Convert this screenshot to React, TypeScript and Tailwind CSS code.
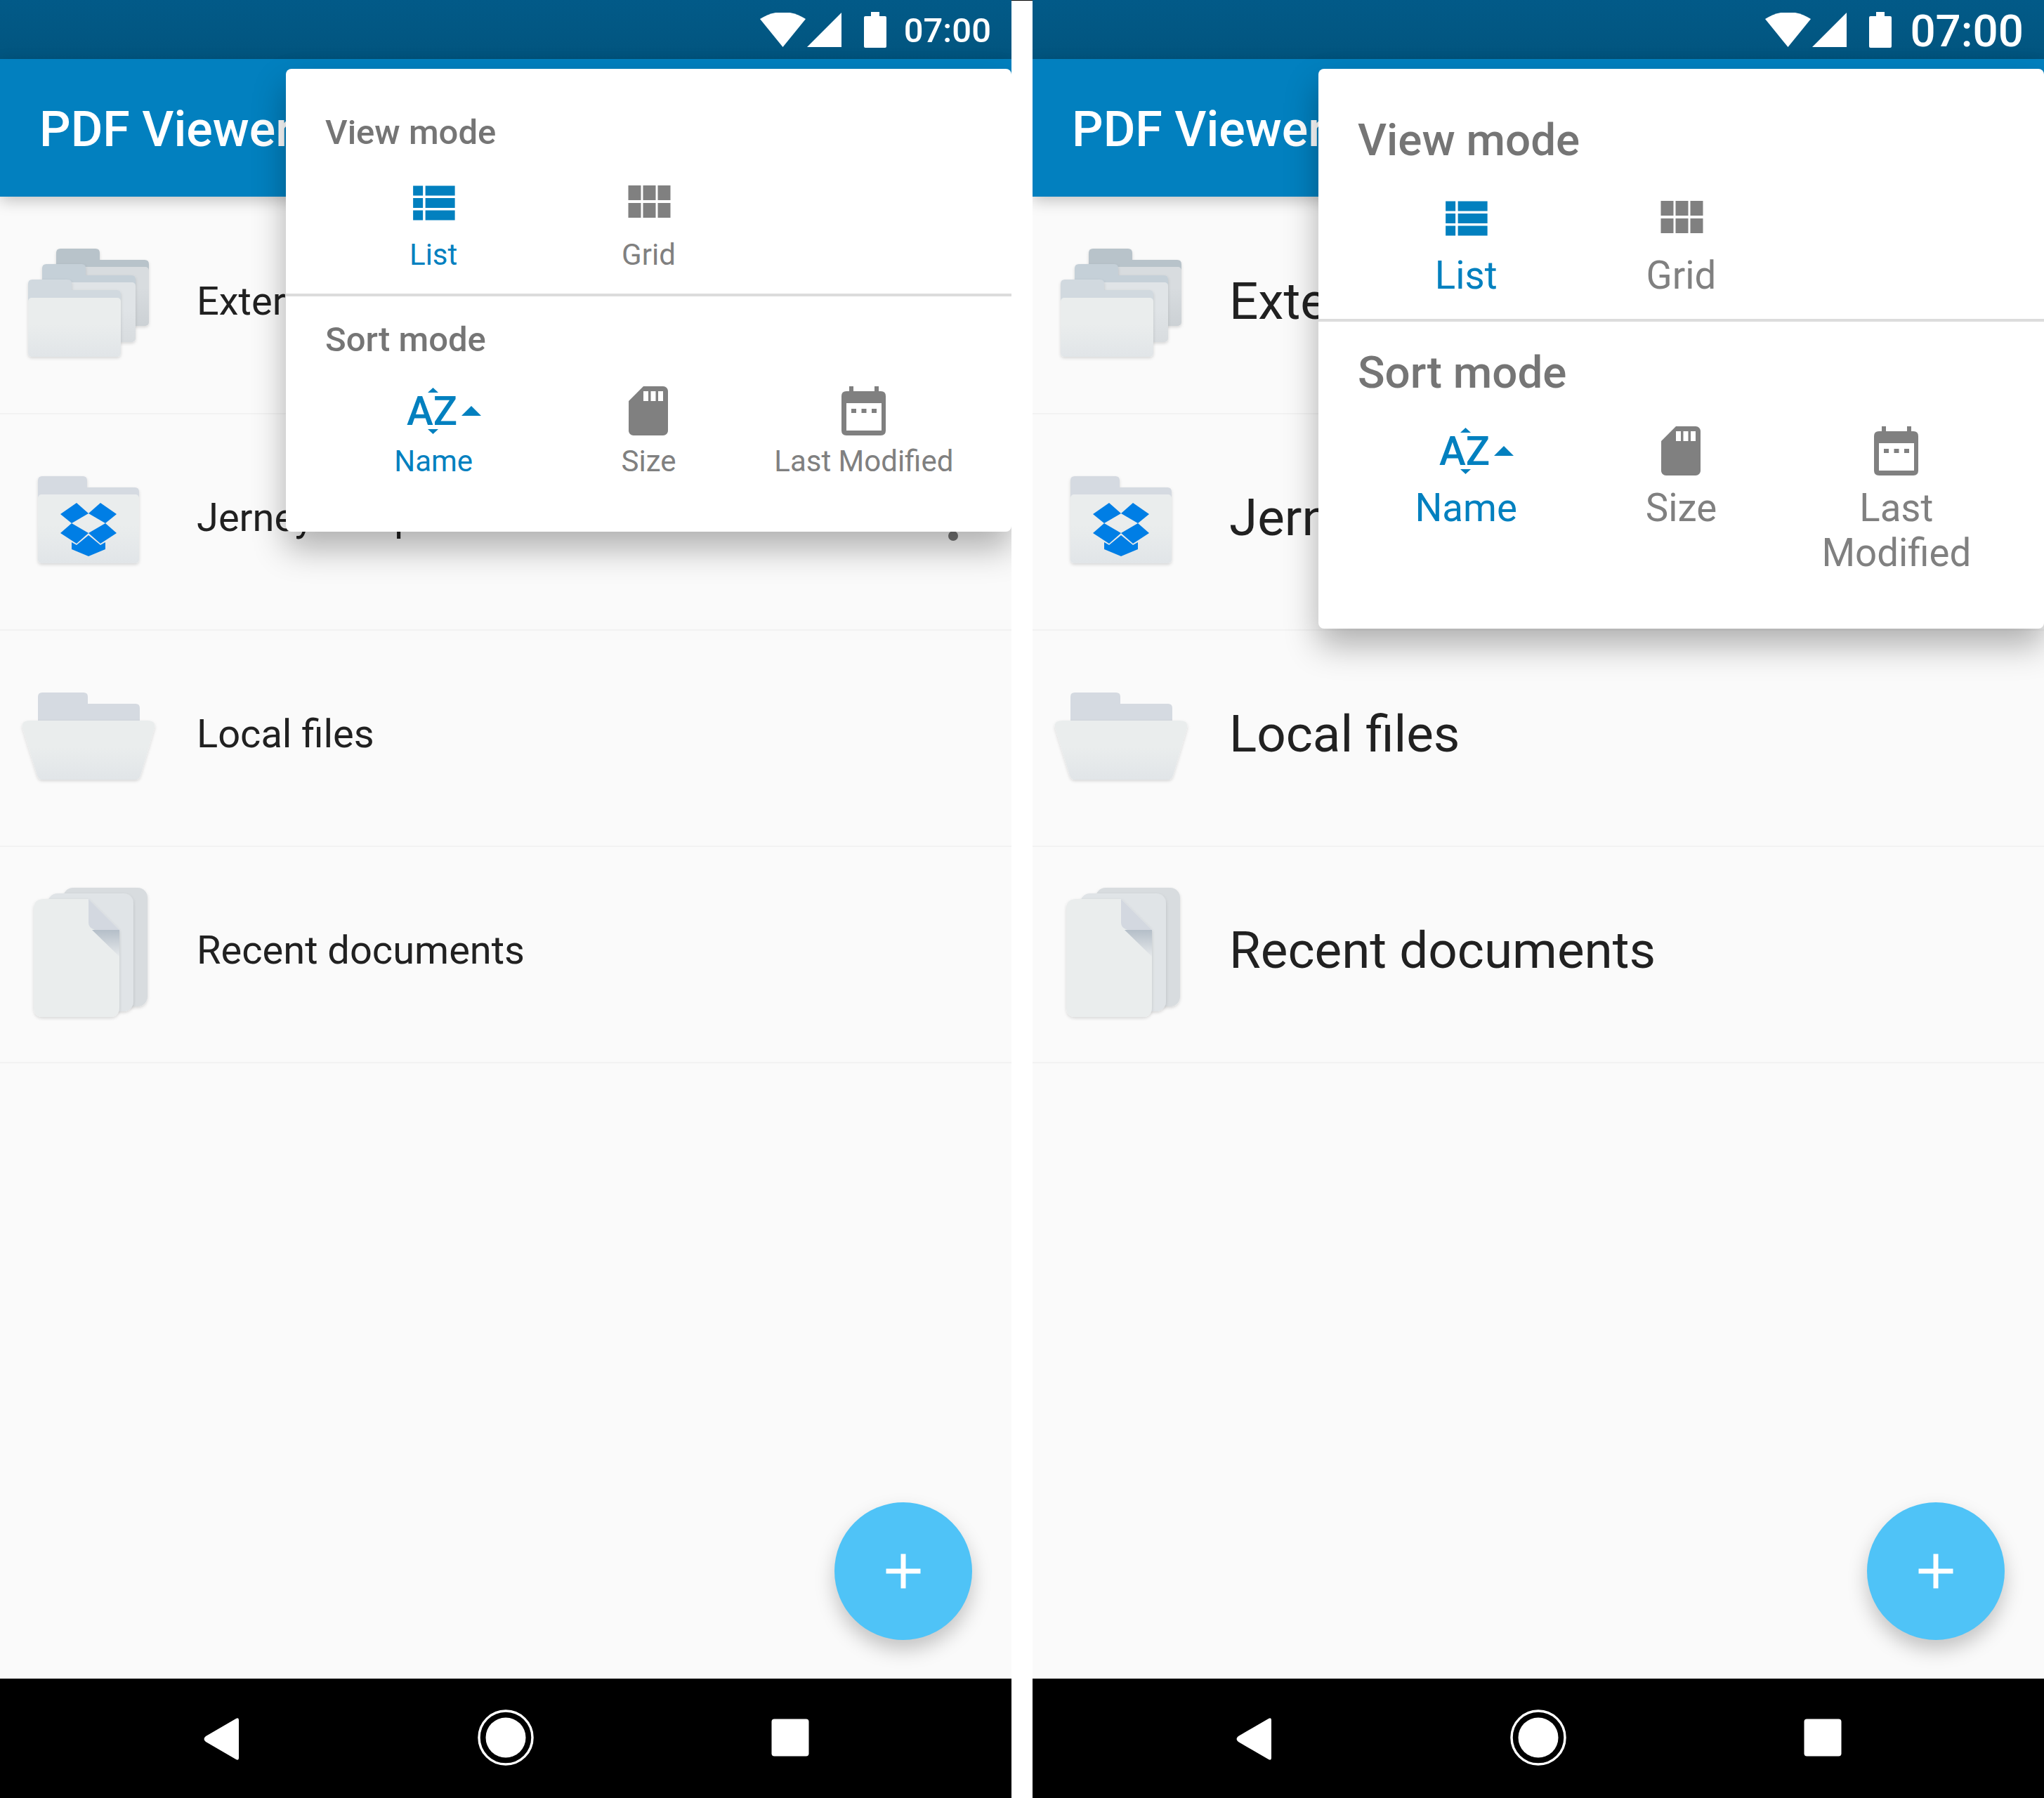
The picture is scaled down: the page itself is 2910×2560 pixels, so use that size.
import type { ReactNode } from "react";

const BLUE = "#0280bf";
const GREY = "#808080";

function IconDefs() {
  return (
    <defs>
      <linearGradient id="sheet" x1="0" y1="0" x2="0" y2="1">
        <stop offset="0.45" stopColor="#eaeded" />
        <stop offset="1" stopColor="#e1e5e8" />
      </linearGradient>
      <linearGradient id="sheetMid" x1="0" y1="0" x2="0" y2="1">
        <stop offset="0.45" stopColor="#e0e4e7" />
        <stop offset="1" stopColor="#d8dcdf" />
      </linearGradient>
      <linearGradient id="sheetBack" x1="0" y1="0" x2="0" y2="1">
        <stop offset="0.35" stopColor="#d8dcdf" />
        <stop offset="1" stopColor="#ccd1d5" />
      </linearGradient>
      <linearGradient id="fold" x1="0" y1="0" x2="0" y2="1">
        <stop offset="0" stopColor="#b4bec8" />
        <stop offset="1" stopColor="#e6e9eb" />
      </linearGradient>
      <filter id="soft" x="-20%" y="-20%" width="140%" height="140%">
        <feDropShadow dx="0" dy="2" stdDeviation="2" floodColor="#000" floodOpacity="0.14" />
      </filter>
    </defs>
  );
}

function Folder({ x, top, w, tab, dip, sheet, bottom, back, fill }: {
  x: number;
  top: number;
  w: number;
  tab: number;
  dip: number;
  sheet: number;
  bottom: number;
  back: string;
  fill: string;
}) {
  return (
    <g filter="url(#soft)">
      <path
        d={`M${x} ${sheet + 8} V${top + 6} q0 -6 6 -6 H${x + tab - 6} q6 0 6 6 V${dip} H${x + w - 6} q6 0 6 6 V${sheet + 8} Z`}
        fill={back}
      />
      <rect x={x} y={sheet} width={w} height={bottom - sheet} rx="5" fill={fill} />
    </g>
  );
}

function StackIcon() {
  return (
    <>
      <Folder x={80} top={74} w={132} tab={62} dip={90} sheet={100} bottom={184} back="#b8c3ca" fill="url(#sheetBack)" />
      <Folder x={60} top={96} w={133} tab={62} dip={112} sheet={122} bottom={207} back="#c5d0d8" fill="url(#sheetMid)" />
      <Folder x={40} top={118} w={132} tab={62} dip={133} sheet={144} bottom={228} back="#d1d9df" fill="url(#sheet)" />
    </>
  );
}

function DropboxIcon() {
  return (
    <>
      <Folder x={54} top={90} w={144} tab={70} dip={106} sheet={116} bottom={214} back="#d5dae1" fill="url(#sheet)" />
      <g fill="#007ee5">
        <path d="M109 128 126 143 102 157 86 144Z" />
        <path d="M143 128 166 144 150 157 126 143Z" />
        <path d="M102 157 126 171 109 186 86 171Z" />
        <path d="M150 157 166 171 143 186 126 171Z" />
        <path d="M126 174 143 188 150 184V194L126 204 102 194V184L109 188Z" />
      </g>
    </>
  );
}

function OpenFolderIcon() {
  return (
    <>
      <path d="M54 132V96q0-6 6-6h59q6 0 6 6v10h68q6 0 6 6v20Z" fill="#d5dae1" />
      <path
        d="M42 130H210q12 0 10 10L200 208q-2 6-7 6H60q-5 0-7-6L32 140q-2-10 10-10Z"
        fill="url(#sheet)"
        filter="url(#soft)"
      />
    </>
  );
}

function DocumentsIcon() {
  return (
    <>
      <rect x="90" y="60" width="120" height="169" rx="14" fill="#d8dcdf" filter="url(#soft)" />
      <rect x="68" y="68" width="122" height="168" rx="14" fill="#e0e4e7" filter="url(#soft)" />
      <path
        d="M62 76H126L170 120V230q0 14-14 14H62q-14 0-14-14V90q0-14 14-14Z"
        fill="#eaeded"
        filter="url(#soft)"
      />
      <path d="M131 120H170V158Z" fill="url(#fold)" />
      <path d="M126 76 170 120H135q-9-3-9-10Z" fill="#d3d8e0" />
    </>
  );
}

function Row({ icon, label, textClass, menu }: { icon: ReactNode; label: string; textClass: string; menu?: boolean }) {
  return (
    <div className="flex h-[308px] items-center shadow-[0_2px_0_#f2f2f2]">
      <svg viewBox="0 0 280 308" className="h-[308px] w-[280px] shrink-0">
        {icon}
      </svg>
      <span className={`flex-1 whitespace-nowrap text-[#212121] ${textClass}`}>{label}</span>
      {menu && (
        <svg viewBox="0 0 24 24" className="mr-[41px] h-[84px] w-[84px] shrink-0" fill="#757575">
          <circle cx="12" cy="6" r="2" />
          <circle cx="12" cy="12" r="2" />
          <circle cx="12" cy="18" r="2" />
        </svg>
      )}
    </div>
  );
}

function ListIcon() {
  return (
    <svg viewBox="0.25 0 24 24" className="h-[84px] w-[84px]" fill={BLUE}>
      <path d="M4 14h4v-4H4v4zm0 5h4v-4H4v4zM4 9h4V5H4v4zm5 5h12v-4H9v4zm0 5h12v-4H9v4zM9 5v4h12V5H9z" />
    </svg>
  );
}

function GridIcon() {
  return (
    <svg viewBox="-1.500 0 84 84" className="h-[84px] w-[84px]" fill={GREY}>
      <rect x="12" y="17" width="18" height="21" />
      <rect x="33" y="17" width="18" height="21" />
      <rect x="54" y="17" width="18" height="21" />
      <rect x="12" y="42" width="18" height="21" />
      <rect x="33" y="42" width="18" height="21" />
      <rect x="54" y="42" width="18" height="21" />
    </svg>
  );
}

function AzIcon() {
  return (
    <svg viewBox="0 0 84 84" className="h-[84px] w-[84px] overflow-visible" fill={BLUE}>
      <text x="4" y="62" fontFamily="Roboto, sans-serif" fontSize="57" fontWeight="500">
        AZ
      </text>
      <path d="M41.500 9 49 16H34Z" />
      <path d="M34 68H49L41.500 75Z" />
      <path d="M82 49H110L96 35Z" />
    </svg>
  );
}

function SdIcon() {
  return (
    <svg viewBox="0 0 24 24" className="h-[84px] w-[84px]" fill={GREY}>
      <path d="M18 2h-8L4.020 8 4 20c0 1.100.9 2 2 2h12c1.100 0 2-.9 2-2V4c0-1.100-.9-2-2-2zm-6 6h-2V4h2v4zm3 0h-2V4h2v4zm3 0h-2V4h2v4z" />
    </svg>
  );
}

function CalendarIcon() {
  return (
    <svg viewBox="0 0 84 84" className="h-[84px] w-[84px]" fill={GREY}>
      <rect x="21" y="7" width="6" height="10" />
      <rect x="57" y="7" width="6" height="10" />
      <path
        fillRule="evenodd"
        d="M17 14H66q7 0 7 7V70q0 7-7 7H17q-7 0-7-7V21q0-7 7-7ZM17 31V70H67V31Z"
      />
      <rect x="24" y="39" width="7" height="6" />
      <rect x="38.500" y="39" width="7" height="6" />
      <rect x="53" y="39" width="7" height="6" />
    </svg>
  );
}

function Option({ icon, label, active, textClass }: { icon: ReactNode; label: string; active?: boolean; textClass: string }) {
  return (
    <div className="flex flex-col items-center">
      {icon}
      <span className={`text-center ${active ? "text-[#0280bf]" : "text-[#808080]"} ${textClass}`}>{label}</span>
    </div>
  );
}

function Popup({ big }: { big: boolean }) {
  const head = big ? "text-[63.7px] leading-[75px]" : "text-[49px] leading-[57px]";
  const viewLabel = big ? "mt-[7px] text-[54.6px] leading-[64px]" : "mt-[7px] text-[42px] leading-[49px]";
  const sortLabel = big ? "mt-[7px] text-[54.6px] leading-[64px]" : "mt-[5px] text-[42px] leading-[49px]";
  return (
    <div className="absolute left-[407px] right-0 top-[98px] z-20 rounded-[8px] bg-white shadow-[0_24px_48px_rgba(0,0,0,0.3)]">
      <div className={`border-b-4 border-[#dcdcdc] px-[57px] ${big ? "pb-[30px] pt-[64px]" : "pb-[31px] pt-[62px]"}`}>
        <div className={`-ml-px font-medium text-[#757575] ${head}`}>View mode</div>
        <div className={`grid grid-cols-3 ${big ? "mt-[32px]" : "mt-[30px]"}`}>
          <Option icon={<ListIcon />} label="List" active textClass={viewLabel} />
          <Option icon={<GridIcon />} label="Grid" textClass={viewLabel} />
        </div>
      </div>
      <div className={`px-[57px] pb-[76px] ${big ? "pt-[35px]" : "pt-[33px]"}`}>
        <div className={`-ml-px font-medium text-[#757575] ${head}`}>Sort mode</div>
        <div className={`grid grid-cols-3 ${big ? "mt-[32px]" : "mt-[31px]"}`}>
          <Option icon={<AzIcon />} label="Name" active textClass={sortLabel} />
          <Option icon={<SdIcon />} label="Size" textClass={sortLabel} />
          <Option icon={<CalendarIcon />} label="Last Modified" textClass={sortLabel} />
        </div>
      </div>
    </div>
  );
}

function Phone({ big }: { big: boolean }) {
  const rowText = big ? "pb-[8px] text-[72.8px]" : "pb-[10px] text-[56px]";
  const clock = big ? "text-[63.7px] ml-[26px] pt-[6px]" : "text-[49px] ml-[25px] pt-[4px]";
  return (
    <div className="relative flex h-[2560px] w-[1440px] shrink-0 flex-col overflow-hidden bg-[#fafafa]">
      <div className="flex h-[84px] shrink-0 items-center justify-end bg-gradient-to-b from-[#025a88] to-[#02557f] pr-[29px] font-medium text-white">
        <svg viewBox="0 0 65 49" className="h-[49px] w-[65px]" fill="#fff">
          <path d="M32.500 49 0 9Q32.500-11 65 9Z" />
        </svg>
        <svg viewBox="0 0 49 49" className="ml-[2px] h-[49px] w-[49px]" fill="#fff">
          <path d="M49 0V49H0Z" />
        </svg>
        <svg viewBox="0 0 32 51" className="ml-[32px] h-[51px] w-[32px]" fill="#fff">
          <path d="M10 0H22V6H30q2 0 2 2V49q0 2-2 2H2q-2 0-2-2V8q0-2 2-2H10Z" />
        </svg>
        <span className={clock}>07:00</span>
      </div>
      <div className="relative z-10 flex h-[196px] shrink-0 items-center bg-[#0280bf] pl-[56px] pt-[4px] text-[70px] font-medium text-white shadow-[0_6px_20px_rgba(0,0,0,0.22)]">
        PDF Viewer
      </div>
      <div className="flex-1">
        <svg className="absolute h-0 w-0">
          <IconDefs />
        </svg>
        <Row icon={<StackIcon />} label="External storage" textClass={rowText} />
        <Row icon={<DropboxIcon />} label={"Jerney\u00a0 Dropbox"} textClass={rowText} menu />
        <Row icon={<OpenFolderIcon />} label="Local files" textClass={rowText} />
        <Row icon={<DocumentsIcon />} label="Recent documents" textClass={rowText} />
      </div>
      <div className="flex h-[170px] shrink-0 items-center justify-center gap-[321px] bg-black pb-[3px]">
        <svg viewBox="0 0 84 84" className="h-[84px] w-[84px]" fill="#fff">
          <path d="M67 17V71q0 4-4 2L20 48q-5-4 0-8L63 15q4-2 4 2Z" />
        </svg>
        <svg viewBox="0 0 84 84" className="h-[84px] w-[84px]">
          <circle cx="42" cy="42" r="38" fill="none" stroke="#fff" strokeWidth="3.500" />
          <circle cx="42" cy="42" r="28.500" fill="#fff" />
        </svg>
        <svg viewBox="0 0 84 84" className="h-[84px] w-[84px]" fill="#fff">
          <rect x="15.500" y="15.500" width="53" height="53" rx="4" />
        </svg>
      </div>
      <Popup big={big} />
      <div className="absolute bottom-[225px] right-[56px] flex h-[196px] w-[196px] items-center justify-center rounded-full bg-[#4fc3f7] shadow-[0_14px_28px_rgba(0,0,0,0.22)]">
        <svg viewBox="0 0 24 24" className="h-[84px] w-[84px]" fill="#fff">
          <path d="M19 13h-6v6h-2v-6H5v-2h6V5h2v6h6v2z" />
        </svg>
      </div>
    </div>
  );
}

export default function App() {
  return (
    <div className="flex h-[2560px] w-[2910px] bg-white [font-family:Roboto,sans-serif]">
      <Phone big={false} />
      <div className="w-[30px] shrink-0 border-t border-black" />
      <Phone big />
    </div>
  );
}
